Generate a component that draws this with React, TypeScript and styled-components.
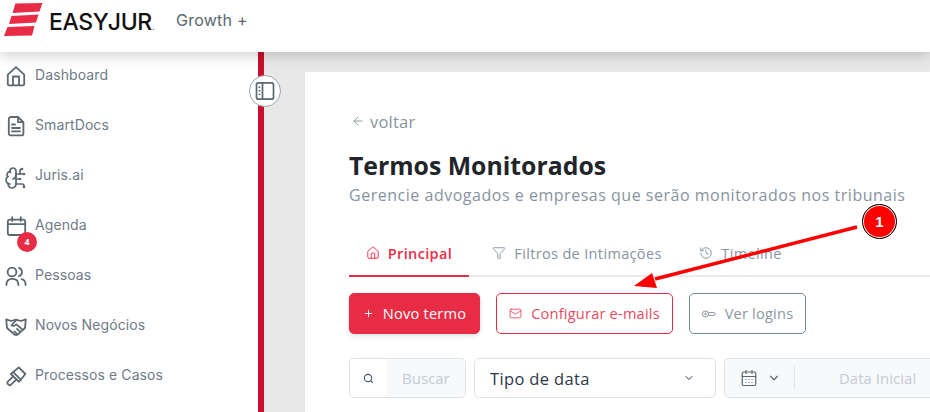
import React from "react";
import styled, { createGlobalStyle } from "styled-components";
import { House, Filter, History, ArrowLeft, Plus, Mail, Search, ChevronDown, CalendarDays } from "lucide-react";
import { LuBrainCircuit } from "react-icons/lu";

const Global = createGlobalStyle`
  html, body { margin: 0; padding: 0; width: 930px; height: 412px; overflow: hidden; background: #e8e8e8; }
  * { box-sizing: border-box; }
  body { font-family: "Open Sans", "Liberation Sans", sans-serif; }
`;
const Page = styled.div`position: relative; width: 930px; height: 412px; overflow: hidden; display: flex; flex-direction: column;`;
const Header = styled.header`
  position: relative; z-index: 2; height: 52px; flex: none; background: #fff; display: flex; align-items: flex-start;
  padding: 3px 0 0 4px; box-shadow: 0 2px 14px rgba(0,0,0,.22);
`;
const Wordmark = styled.span`
  margin: 8px 0 0 6px; font: 500 23px/1 Inter, sans-serif; letter-spacing: -0.35px; color: #111; width: 127px;
  small { font-size: 8px; color: #555; letter-spacing: 0; }
`;
const Plan = styled.span`font: 400 16px/1 Inter, sans-serif; color: #5a6872; margin-top: 9px; letter-spacing: .25px;`;
const Body = styled.div`flex: 1; display: flex; min-height: 0;`;
const Sidebar = styled.nav`
  position: relative; width: 264px; flex: none; background: #fff; border-right: 6px solid #c8102e;
  display: flex; flex-direction: column;
`;
const NavRow = styled.div`
  position: relative; height: 50px; flex: none; display: flex; align-items: center; gap: 7px; padding: 0 0 0 4px; color: #5b6870;
  svg { flex: none; margin-top: 2px; }
`;
const NavLabel = styled.span`font: 400 14px/1 Inter, sans-serif; color: #6f7b87; margin-top: -4px; letter-spacing: .1px;`;
const Badge = styled.span`
  position: absolute; left: 17px; top: 30px; width: 20px; height: 20px; border-radius: 50%; background: #e82c45; color: #fff;
  font: 700 9px/20px "Open Sans", sans-serif; text-align: center;
`;
const Toggle = styled.button`
  position: absolute; left: 249px; top: 23px; width: 32px; height: 32px; padding: 0; border-radius: 50%; background: #fff; border: 1px solid #9aa5ad;
  display: flex; align-items: center; justify-content: center; color: #5b6870;
`;
const Content = styled.main`flex: 1; min-width: 0; padding: 20px 0 0 41px; background: #e8e8e8;`;
const Panel = styled.section`height: 100%; background: #fff; padding: 39px 0 0 44px;`;
const Back = styled.div`display: flex; align-items: center; gap: 5px; height: 20px; padding-left: 2px; font-size: 16.5px; color: #87939f; letter-spacing: .2px;`;
const Title = styled.h1`margin: 19px 0 0; font: 700 24.8px/30px "Open Sans", sans-serif; color: #212529;`;
const Subtitle = styled.p`margin: 3px 0 0; font: 400 16px/24px "Open Sans", sans-serif; color: #87939f; letter-spacing: .52px; white-space: nowrap;`;
const Tabs = styled.div`display: flex; margin-top: 24px; border-bottom: 2px solid #e9ecef; height: 46px;`;
const Tab = styled.div<{ $active?: boolean; $w: number }>`
  width: ${p => p.$w}px; flex: none; height: 46px; display: flex; align-items: center; justify-content: center; gap: 8px;
  font-size: 14.5px; font-weight: ${p => p.$active ? 600 : 500}; color: ${p => p.$active ? "#e82c45" : "#87939f"};
  border-bottom: 2px solid ${p => p.$active ? "#e82c45" : "transparent"}; white-space: nowrap; letter-spacing: .35px;
`;
const Buttons = styled.div`display: flex; gap: 16px; margin-top: 16px;`;
const Btn = styled.button<{ $kind: "solid" | "red" | "grey"; $w: number }>`
  width: ${p => p.$w}px; height: 41px; border-radius: 5px; display: flex; align-items: center; justify-content: center; gap: 9px; padding: 0;
  font: ${p => p.$kind === "solid" ? 500 : 400} 14.6px/1 "Open Sans", sans-serif; letter-spacing: .2px;
  background: ${p => p.$kind === "solid" ? "#e82c45" : "#fff"};
  color: ${p => p.$kind === "solid" ? "#fff" : p.$kind === "red" ? "#ea4a60" : "#8a96a2"};
  border: 1px solid ${p => p.$kind === "grey" ? "#74868f" : "#e82c45"};
  box-shadow: ${p => p.$kind === "solid" ? "0 2px 5px rgba(0,0,0,.12)" : "none"};
`;
const Filters = styled.div`display: flex; gap: 8px; margin-top: 24px;`;
const SearchBox = styled.div`width: 117px; height: 40px; flex: none; border: 1px solid #dee2e6; border-radius: 5px; display: flex; overflow: hidden;`;
const SearchIcon = styled.div`width: 37px; display: flex; align-items: center; justify-content: center; color: #3b4a66; background: #fff;`;
const SearchText = styled.div`flex: 1; background: #f8f9fa; color: #c3ccd4; font-size: 15px; display: flex; align-items: center; padding-left: 15px;`;
const Select = styled.div`width: 242px; height: 40px; flex: none; border: 1px solid #dee2e6; border-radius: 5px; display: flex; align-items: center; justify-content: space-between; padding: 0 20px 0 15px; color: #2d3748; font-size: 16.5px; letter-spacing: .35px; svg { color: #2d3a55; }`;
const DateBox = styled.div`width: 240px; height: 40px; flex: none; border: 1px solid #dee2e6; border-right: 0; border-radius: 5px 0 0 5px; background: #f8f9fa; display: flex; align-items: center; padding-left: 15px; color: #5b6870;`;
const DateDivider = styled.span`width: 1px; height: 24px; background: #e2e5e8; margin: 0 44px 0 13px;`;
const DateText = styled.span`color: #c3ccd4; font-size: 14.8px; white-space: nowrap; letter-spacing: .1px;`;
const Annotation = styled.svg`position: absolute; left: 0; top: 0; z-index: 5; pointer-events: none;`;
const Marker = styled.div`
  position: absolute; z-index: 6; left: 862px; top: 204px; width: 35px; height: 35px; border-radius: 50%; background: #f00; border: 1px solid #000;
  box-shadow: inset 0 0 0 1px #fff; color: #fff; font: 700 15px/33px "Liberation Sans", sans-serif; text-align: center;
`;

const Logo = () => (
  <svg width="39" height="34" viewBox="0 0 39 34" style={{ flex: "none" }}>
    <g fill="#e82c45">
      <path d="M11.5 0.5 L38.5 0 L35.5 8.5 L8.5 10 Z" />
      <path d="M7.5 13 L34.5 11.5 L32 19.5 L5 21 Z" />
      <path d="M3.5 24 L30.5 23 L28 32.5 L0 33 Z" />
    </g>
  </svg>
);

const KeyIcon = () => (
  <svg width="14" height="8" viewBox="0 0 14 8" fill="none" stroke="currentColor" strokeWidth="1">
    <circle cx="3.5" cy="4" r="3" />
    <circle cx="3.5" cy="4" r="0.8" />
    <path d="M6.5 2.6 H12.5 L13.5 4 L12.5 5.4 H6.5" />
  </svg>
);

const Ico: React.FC<{ children: React.ReactNode }> = ({ children }) => (
  <svg width="24" height="24" viewBox="0 0 24 24" fill="none" stroke="currentColor" strokeWidth="1.8" strokeLinejoin="round" strokeLinecap="round">
    {children}
  </svg>
);
const HomeIcon = () => <Ico><path d="M3.8 18 V8.6 L12 1.2 L20.2 8.6 V18 a1.4 1.4 0 0 1 -1.4 1.4 H5.2 A1.4 1.4 0 0 1 3.8 18 Z" /><path d="M9 19 V10.5 H15 V19" /></Ico>;
const DocIcon = () => <Ico><path d="M6.8 1 H14 L19.4 6.2 V17.4 a2 2 0 0 1 -2 2 H6.8 a2 2 0 0 1 -2 -2 V3 a2 2 0 0 1 2 -2 Z" /><path d="M14 1.5 V6.2 H19" /><path d="M8 8.5 H11 M8 12 H16 M8 15.4 H16" /></Ico>;
const CalIcon = () => <Ico><rect x="3.8" y="3.6" width="17.4" height="15.4" rx="2" /><path d="M4 8.2 H21 M8.2 1.2 V5 M16.8 1.2 V5" /></Ico>;
const UsersIcon = () => <Ico><circle cx="8" cy="6" r="4.4" /><path d="M2.4 19 C2.4 14.6 4.8 12.8 8.4 12.8 C12 12.8 14.4 14.6 14.4 19" /><path d="M15 1.9 a4.4 4.4 0 0 1 0 8.3" /><path d="M17.6 13.2 C20.2 13.8 21.6 15.8 21.6 19" /></Ico>;
const ShakeIcon = () => <Ico><path d="M2.2 3.4 L7 5 L12 3.6 L17 5 L21.8 3.4 L21 12 L13.4 18.8 H10.8 L3 12 Z" /><path d="M12.4 4 L7.6 9 Q9.6 11 12.4 8.4 L18.6 13.6" /><path d="M15.8 15.4 L13 12.8 M12.8 17.6 L10.4 15.4" /></Ico>;
const HammerIcon = () => <Ico><path d="M9.2 10.4 L3.8 15.6 a1.7 1.7 0 0 0 0 2.4 L4.6 18.6 a1.7 1.7 0 0 0 2.4 0 L12.6 13.4" /><path d="M6.8 8 L14.8 1.4 L21.4 8 L15 15.8 Z" /><path d="M9.2 6.2 L17 13.8" /></Ico>;
const BrainIcon = () => <LuBrainCircuit size={24} strokeWidth={1.7} />;
const SideIcon = () => (
  <svg width="20" height="20" viewBox="0 0 20 20" fill="none" stroke="currentColor" strokeWidth="1.7">
    <rect x="1.5" y="1.8" width="17" height="16.4" rx="2" />
    <path d="M7.5 2 V18" />
    <path d="M4.5 5.5 V15" strokeDasharray="1.4 2.2" />
  </svg>
);

const nav = [
  { label: "Dashboard", Icon: HomeIcon },
  { label: "SmartDocs", Icon: DocIcon },
  { label: "Juris.ai", Icon: BrainIcon },
  { label: "Agenda", Icon: CalIcon, badge: "4" },
  { label: "Pessoas", Icon: UsersIcon },
  { label: "Novos Negócios", Icon: ShakeIcon },
  { label: "Processos e Casos", Icon: HammerIcon },
];

export default function App() {
  return (
    <Page>
      <Global />
      <Header>
        <Logo />
        <Wordmark>EASYJUR<small>.</small></Wordmark>
        <Plan>Growth +</Plan>
      </Header>
      <Body>
        <Sidebar>
          {nav.map(({ label, Icon, badge }) => (
            <NavRow key={label}>
              <Icon />
              <NavLabel>{label}</NavLabel>
              {badge && <Badge>{badge}</Badge>}
            </NavRow>
          ))}
          <Toggle><SideIcon /></Toggle>
        </Sidebar>
        <Content>
          <Panel>
            <Back><ArrowLeft size={14} strokeWidth={1.6} />voltar</Back>
            <Title>Termos Monitorados</Title>
            <Subtitle>Gerencie advogados e empresas que serão monitorados nos tribunais</Subtitle>
            <Tabs>
              <Tab $active $w={120}><House size={14} strokeWidth={1.6} />Principal</Tab>
              <Tab $w={216}><Filter size={14} strokeWidth={1.6} />Filtros de Intimações</Tab>
              <Tab $w={111}><History size={14} strokeWidth={1.6} />Timeline</Tab>
            </Tabs>
            <Buttons>
              <Btn $kind="solid" $w={131}><Plus size={11} strokeWidth={2} />Novo termo</Btn>
              <Btn $kind="red" $w={177}><Mail size={13} strokeWidth={1.6} />Configurar e-mails</Btn>
              <Btn $kind="grey" $w={117}><KeyIcon />Ver logins</Btn>
            </Buttons>
            <Filters>
              <SearchBox>
                <SearchIcon><Search size={11} strokeWidth={2.2} /></SearchIcon>
                <SearchText>Buscar</SearchText>
              </SearchBox>
              <Select>Tipo de data<ChevronDown size={12} strokeWidth={2} /></Select>
              <DateBox>
                <CalendarDays size={18} strokeWidth={1.6} />
                <ChevronDown size={14} strokeWidth={2} style={{ marginLeft: 9 }} />
                <DateDivider />
                <DateText>Data Inicial</DateText>
              </DateBox>
            </Filters>
          </Panel>
        </Content>
      </Body>
      <Annotation width="930" height="412" viewBox="0 0 930 412">
        <path d="M857 227 L655 279" stroke="#f00" strokeWidth="3.4" fill="none" />
        <path d="M634 286 L652 273 L657 288 Z" fill="#f00" />
      </Annotation>
      <Marker>1</Marker>
    </Page>
  );
}
